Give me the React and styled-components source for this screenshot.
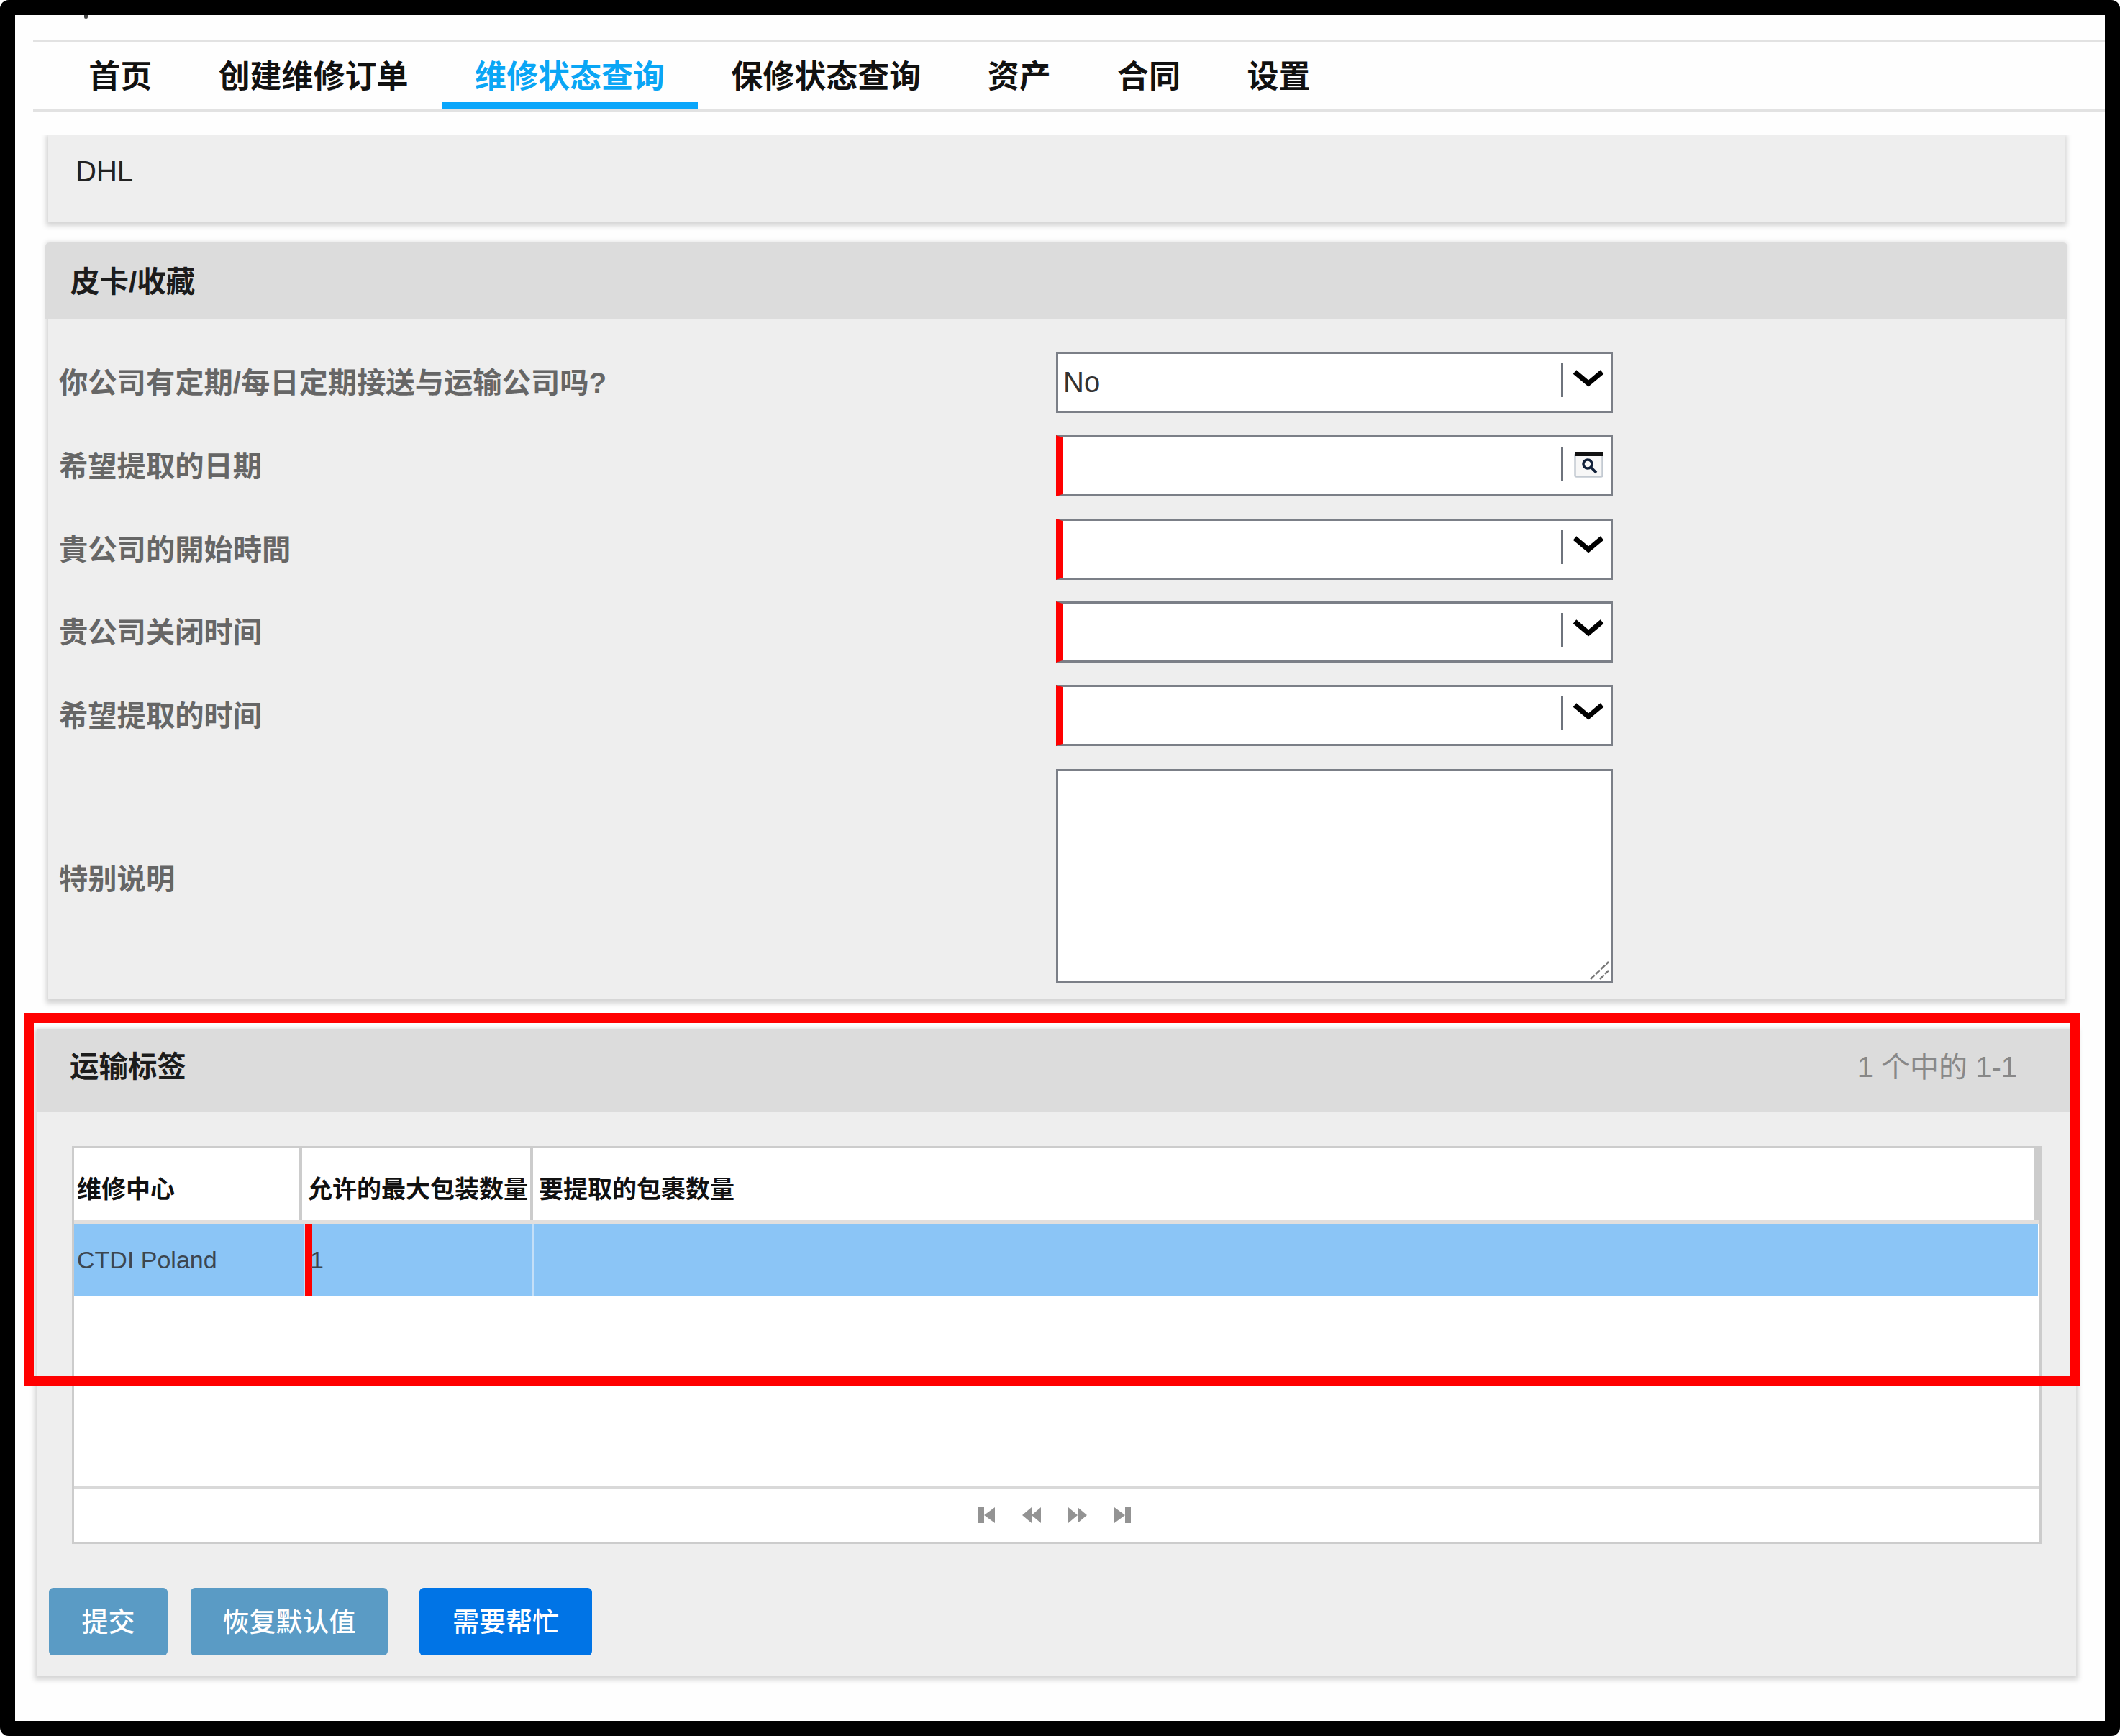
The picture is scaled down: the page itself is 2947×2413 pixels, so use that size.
import React from "react";
import styled, { createGlobalStyle } from "styled-components";

const Global = createGlobalStyle`
  html, body { margin: 0; padding: 0; background: #fff; }
  body { font-family: "Liberation Sans", "Noto Sans CJK SC", sans-serif; }
  * { box-sizing: border-box; }
`;

const Frame = styled.div`
  position: relative;
  width: 2947px;
  height: 2413px;
  border: 21px solid #000;
  border-radius: 12px;
  background: #fefefe;
  overflow: hidden;
`;

const TopStrip = styled.div`
  height: 37px;
  margin-left: 25px;
  border-bottom: 3px solid #e2e2e2;
`;

const ClippedGlyph = styled.span`
  display: block;
  width: 5px;
  height: 5px;
  margin-left: 71px;
  background: #444;
  border-radius: 0 0 3px 3px;
`;

const Nav = styled.nav`
  display: flex;
  margin-left: 25px;
  padding-left: 31px;
  border-bottom: 3px solid #e2e2e2;
`;

const Tab = styled.div`
  display: flex;
  align-items: center;
  height: 94px;
  padding: 6px 46.2px 0;
  border-bottom: 10px solid ${(p) => (p.$active ? "#0aa6fb" : "transparent")};
  color: ${(p) => (p.$active ? "#0aa6f5" : "#111")};
  font-size: 44px;
  font-weight: 700;
  white-space: nowrap;
`;

const Content = styled.main`
  padding-top: 32px;
`;

const panelShadow = "0 3px 7px 3px rgba(0, 0, 0, 0.17)";

const CarrierPanel = styled.section`
  margin-left: 46px;
  width: 2803px;
  height: 121px;
  padding: 26px 0 0 38px;
  background: #eee;
  box-shadow: ${panelShadow};
  clip-path: inset(0 -20px -20px -20px);
  color: #222;
  font-size: 40px;
  line-height: 50px;
`;

const PickupPanel = styled.section`
  margin: 29px 0 0 46px;
  width: 2803px;
  background: #eee;
  box-shadow: ${panelShadow};
`;

const PickupHeader = styled.header`
  display: flex;
  align-items: center;
  height: 106px;
  margin: 0 -4px;
  padding: 0 0 3px 35px;
  background: #dcdcdc;
  border-radius: 6px 6px 0 0;
`;

const PanelTitle = styled.h2`
  margin: 0;
  color: #1c1c1c;
  font-size: 40.5px;
  font-weight: 700;
`;

const FormGrid = styled.div`
  display: grid;
  grid-template-columns: 1385px 774px;
  row-gap: 30.75px;
  padding: 46px 0 22px 16px;
`;

const FieldLabel = styled.label`
  align-self: center;
  margin-left: -1px;
  padding: ${(p) => (p.$low ? "2px 0 0" : "0 0 6px")};
  color: #666;
  font-size: 40.3px;
  font-weight: 700;
  white-space: nowrap;
`;

const Control = styled.div`
  display: flex;
  height: 85px;
  background: #fff;
  border: 3px solid #7b7f87;
  border-left: ${(p) => (p.$required ? "9px solid #f00" : "3px solid #7b7f87")};
`;

const ControlValue = styled.span`
  flex: 1;
  padding-left: 7px;
  color: #333;
  font-size: 40px;
  line-height: 79px;
`;

const Addon = styled.span`
  display: flex;
  align-items: center;
  justify-content: center;
  width: 69px;
  height: 47px;
  margin-top: 13px;
  padding-left: 4px;
  border-left: 3px solid #6e737c;
`;

const ChevronSvg = styled.svg`
  display: block;
  margin-top: -6px;
`;

const CalendarSvg = styled.svg`
  display: block;
  margin-top: 4px;
`;

const NotesWrap = styled.div`
  position: relative;
  height: 298px;
  margin-top: 1px;
`;

const Notes = styled.textarea`
  display: block;
  width: 100%;
  height: 100%;
  padding: 8px;
  border: 3px solid #7b7f87;
  border-radius: 0;
  background: #fff;
  resize: none;
  outline: none;
`;

const Grip = styled.svg`
  position: absolute;
  right: 5px;
  bottom: 5px;
`;

const LabelsPanel = styled.section`
  margin: 41px 0 0 30px;
  width: 2835px;
  padding-bottom: 28px;
  background: #eee;
  box-shadow: ${panelShadow};
`;

const LabelsHeader = styled.header`
  display: flex;
  align-items: center;
  justify-content: space-between;
  height: 115px;
  padding: 0 82px 15px 46px;
  background: #dcdcdc;
`;

const Counter = styled.span`
  color: #888;
  font-size: 40px;
`;

const TableBox = styled.div`
  display: flex;
  flex-direction: column;
  width: 2738px;
  height: 553px;
  margin: 48px 0 0 49px;
  background: #fff;
  border: 3px solid #ccc;
`;

const HeadRow = styled.div`
  display: grid;
  grid-template-columns: 317px 321px 1fr;
  height: 105px;
  border-bottom: 5px solid #e2dfdd;
`;

const HeadCell = styled.div`
  display: flex;
  align-items: center;
  padding: 10px 0 0 ${(p) => p.$inset}px;
  border-right: ${(p) => p.$edge}px solid #ccc;
  color: #111;
  font-size: 34px;
  font-weight: 700;
  white-space: nowrap;
`;

const DataRow = styled.div`
  display: grid;
  grid-template-columns: 321px 318px 1fr;
  height: 101px;
  margin-right: 2px;
  background: #8bc5f6;
`;

const DataCell = styled.div`
  display: flex;
  align-items: center;
  padding-left: 4px;
  border-right: 2px solid #c4dff7;
  color: #3c4650;
  font-size: 34px;
`;

const QuantityCell = styled(DataCell)`
  padding-left: 0;
  border-left: 10px solid #f00;
`;

const QuantityValue = styled.span`
  margin-left: -3px;
`;

const BlankCell = styled.div``;

const TableSpace = styled.div`
  flex: 1;
`;

const Pager = styled.div`
  display: flex;
  align-items: center;
  justify-content: center;
  gap: 38px;
  height: 78px;
  padding-right: 7px;
  border-top: 5px solid #d9d9d9;
`;

const PagerSvg = styled.svg`
  display: block;
  fill: #939393;
`;

const ButtonBar = styled.div`
  display: flex;
  gap: 32px;
  margin-top: 61px;
  padding-left: 17px;
`;

const ActionButton = styled.button`
  height: 94px;
  width: ${(p) => p.$w}px;
  margin-left: ${(p) => (p.$help ? 12 : 0)}px;
  padding: 0 0 3px;
  border: 0;
  border-radius: 6px;
  background: ${(p) => (p.$help ? "#0074e6" : "#5a9bc5")};
  color: #fff;
  font-family: inherit;
  font-size: 37px;
  font-weight: 500;
`;

const Annotation = styled.div`
  position: absolute;
  left: 12px;
  top: 1387px;
  width: 2858px;
  height: 518px;
  border: 14px solid #f00;
  pointer-events: none;
`;

const Chevron = () => (
  <ChevronSvg width="44" height="26" viewBox="0 0 44 26" aria-hidden="true">
    <path d="M3 4 L22 20 L41 4" fill="none" stroke="#000" strokeWidth="7" />
  </ChevronSvg>
);

const CalendarSearch = () => (
  <CalendarSvg width="41" height="36" viewBox="0 0 41 36" aria-hidden="true">
    <rect x="1.5" y="3" width="38" height="31.5" rx="2" fill="#f7f7f7" stroke="#c3cad2" strokeWidth="2.5" />
    <rect x="1" y="0" width="39" height="6" fill="#111" />
    <circle cx="19" cy="17" r="6" fill="none" stroke="#10203a" strokeWidth="3.5" />
    <path d="M23.5 21.5 L31 29" stroke="#10203a" strokeWidth="3.5" />
  </CalendarSvg>
);

const PagerFirst = () => (
  <PagerSvg width="23" height="22" viewBox="0 0 23 22" aria-hidden="true">
    <path d="M0 0h8v22H0zM23 0v22L8 11z" />
  </PagerSvg>
);
const PagerPrev = () => (
  <PagerSvg width="26" height="22" viewBox="0 0 26 22" aria-hidden="true">
    <path d="M13 0v22L0 11zM26 0v22L13 11z" />
  </PagerSvg>
);
const PagerNext = () => (
  <PagerSvg width="26" height="22" viewBox="0 0 26 22" aria-hidden="true">
    <path d="M0 0l13 11L0 22zM13 0l13 11-13 11z" />
  </PagerSvg>
);
const PagerLast = () => (
  <PagerSvg width="23" height="22" viewBox="0 0 23 22" aria-hidden="true">
    <path d="M0 0l15 11L0 22zM15 0h8v22h-8z" />
  </PagerSvg>
);

const tabs = ["首页", "创建维修订单", "维修状态查询", "保修状态查询", "资产", "合同", "设置"];

const fields = [
  { label: "你公司有定期/每日定期接送与运输公司吗?", value: "No" },
  { label: "希望提取的日期", required: true, calendar: true },
  { label: "貴公司的開始時間", required: true },
  { label: "贵公司关闭时间", required: true },
  { label: "希望提取的时间", required: true },
];

export default function App() {
  return (
    <Frame>
      <Global />
      <TopStrip>
        <ClippedGlyph />
      </TopStrip>
      <Nav>
        {tabs.map((t) => (
          <Tab key={t} $active={t === "维修状态查询"}>
            {t}
          </Tab>
        ))}
      </Nav>
      <Content>
        <CarrierPanel>DHL</CarrierPanel>

        <PickupPanel>
          <PickupHeader>
            <PanelTitle>皮卡/收藏</PanelTitle>
          </PickupHeader>
          <FormGrid>
            {fields.map((f) => (
              <React.Fragment key={f.label}>
                <FieldLabel>{f.label}</FieldLabel>
                <Control $required={f.required}>
                  <ControlValue>{f.value}</ControlValue>
                  <Addon>{f.calendar ? <CalendarSearch /> : <Chevron />}</Addon>
                </Control>
              </React.Fragment>
            ))}
            <FieldLabel $low>特别说明</FieldLabel>
            <NotesWrap>
              <Notes />
              <Grip width="27" height="26" viewBox="0 0 27 26" aria-hidden="true">
                <path d="M1 25 L26 1 M14 25 L26 13" stroke="#777" strokeWidth="2.5" strokeDasharray="8 2" fill="none" />
              </Grip>
            </NotesWrap>
          </FormGrid>
        </PickupPanel>

        <LabelsPanel>
          <LabelsHeader>
            <PanelTitle>运输标签</PanelTitle>
            <Counter>1 个中的 1-1</Counter>
          </LabelsHeader>
          <TableBox>
            <HeadRow>
              <HeadCell $inset={4} $edge={5}>维修中心</HeadCell>
              <HeadCell $inset={8} $edge={4}>允许的最大包装数量</HeadCell>
              <HeadCell $inset={8} $edge={7}>要提取的包裹数量</HeadCell>
            </HeadRow>
            <DataRow>
              <DataCell>CTDI Poland</DataCell>
              <QuantityCell>
                <QuantityValue>1</QuantityValue>
              </QuantityCell>
              <BlankCell />
            </DataRow>
            <TableSpace />
            <Pager>
              <PagerFirst />
              <PagerPrev />
              <PagerNext />
              <PagerLast />
            </Pager>
          </TableBox>
          <ButtonBar>
            <ActionButton $w={165}>提交</ActionButton>
            <ActionButton $w={274}>恢复默认值</ActionButton>
            <ActionButton $w={240} $help>需要帮忙</ActionButton>
          </ButtonBar>
        </LabelsPanel>
      </Content>
      <Annotation />
    </Frame>
  );
}
